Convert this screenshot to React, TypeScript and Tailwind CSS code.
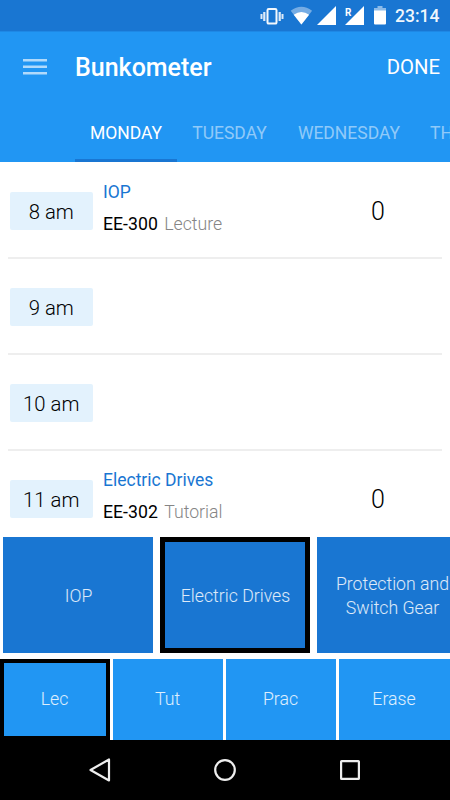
import { ReactNode } from 'react';

type Slot = {
  time: string;
  subject?: string;
  code?: string;
  kind?: string;
  bunks?: number;
};

const slots: Slot[] = [
  { time: '8 am', subject: 'IOP', code: 'EE-300', kind: 'Lecture', bunks: 0 },
  { time: '9 am' },
  { time: '10 am' },
  { time: '11 am', subject: 'Electric Drives', code: 'EE-302', kind: 'Tutorial', bunks: 0 },
];

const kinds = ['Lec', 'Tut', 'Prac', 'Erase'];

function StatusBar() {
  return (
    <div className="flex h-8 shrink-0 items-center justify-end border-b border-[#1e88e5] bg-[#1976d2] pr-[8px]">
      <svg width="130" height="32" viewBox="0 0 130 32" fill="#fff" className="shrink-0">
        {/* vibrate */}
        <rect x="7.500" y="9" width="9" height="14.6" rx="1.2" fill="none" stroke="#fff" strokeOpacity="0.95" strokeWidth="2" />
        <path d="M3.200 12h2.200v9H3.200zM0.500 14h2v5h-2zM18.600 12h2.200v9h-2.200zM21.500 14h2v5h-2z" fillOpacity="0.85" />
        {/* wifi */}
        <path d="M41.400 24.500 30.700 10.700Q41.400 2.700 52.100 10.700z" fillOpacity="0.4" />
        <path d="M41.400 24.500 33.700 14.700Q41.400 9.300 49.100 14.700z" />
        {/* sim signals */}
        <path d="M76 6v19H57z" />
        <path d="M104 6v19H85z" />
        <text x="85" y="16" fontSize="10" fontWeight="700" fontFamily="Roboto, sans-serif">R</text>
        {/* battery */}
        <path d="M117.500 6h5v2h3.500v3h-12V8h3.500z" fillOpacity="0.5" />
        <path d="M114 10.500h12V23.500q0 1-1 1h-10q-1 0-1-1z" />
      </svg>
      <span className="ml-[5px] w-[47px] text-[17.5px] leading-8 font-medium whitespace-nowrap text-white/95">23:14</span>
    </div>
  );
}

function Header() {
  return (
    <header className="flex h-[130px] shrink-0 flex-col bg-[#2196f3]">
      <div className="flex h-[71px] items-center pr-[10px] pl-[23px] text-white">
        <svg width="24" height="18" viewBox="0 0 24 18" fill="#fff" fillOpacity="0.65">
          <path d="M0 0h24v2.600H0zM0 6.500h24v2.600H0zM0 13h24v2.600H0z" />
        </svg>
        <h1 className="ml-7 text-[25px] font-medium">Bunkometer</h1>
        <span className="ml-auto text-[20.3px]">DONE</span>
      </div>
      <nav className="ml-[75px] flex h-[59px] overflow-hidden text-[17.5px] leading-[60px] whitespace-nowrap text-white/50">
        <span className="w-[102px] shrink-0 border-b-[3px] border-[#1976d2] text-center text-white">MONDAY</span>
        <span className="w-[105px] shrink-0 text-center">TUESDAY</span>
        <span className="w-[134px] shrink-0 text-center">WEDNESDAY</span>
        <span className="ml-[14px] shrink-0">THURSDAY</span>
      </nav>
    </header>
  );
}

function SlotRow({ slot }: { slot: Slot }) {
  return (
    <li className="mr-2 ml-2 flex h-[96px] shrink-0 items-center border-b-2 border-[#eeeeee] pt-[2px] pl-[2px]">
      <div className="h-[38px] w-[82.500px] rounded-[2px] bg-[#e3f2fd] text-center text-[20.3px] leading-[40px] font-light">
        {slot.time}
      </div>
      {slot.subject && (
        <>
          <div className="ml-[10.500px] w-[240px] pb-[6px]">
            <div className="text-[17.5px] leading-8 text-[#1976d2]">{slot.subject}</div>
            <div className="text-[17.700px] leading-8">
              {slot.code} <span className="ml-[2px] font-light text-[#858585]">{slot.kind}</span>
            </div>
          </div>
          <div className="w-[70px] pt-[2px] text-center text-[25px] font-light">{slot.bunks}</div>
        </>
      )}
    </li>
  );
}

function SubjectTile({ children, selected }: { children: ReactNode; selected?: boolean }) {
  return (
    <div
      className={
        'flex h-[115.500px] w-[150px] shrink-0 items-center justify-center bg-[#1976d2] pt-[2px] pl-[1px] text-center text-[17.700px] leading-[24px] font-light whitespace-nowrap text-white/85 ' +
        (selected ? 'border-[5px] border-black' : '')
      }
    >
      {children}
    </div>
  );
}

function NavBar() {
  return (
    <div className="flex h-[60px] shrink-0 items-center justify-center gap-[101px] bg-black">
      <svg width="24" height="26" viewBox="0 0 24 26" fill="none" stroke="#eee" strokeWidth="2.200" strokeLinejoin="round">
        <path d="M21 2.500v21L2.500 13z" />
      </svg>
      <svg width="24" height="24" viewBox="0 0 24 24" fill="none" stroke="#eee" strokeWidth="2.200">
        <circle cx="12" cy="12" r="9.800" />
      </svg>
      <svg width="24" height="24" viewBox="0 0 24 24" fill="none" stroke="#eee" strokeWidth="2.200">
        <rect x="3.100" y="3.100" width="17.800" height="17.800" rx="0.500" />
      </svg>
    </div>
  );
}

export default function App() {
  return (
    <div className="flex h-[800px] w-[450px] flex-col overflow-hidden bg-white font-[Roboto,sans-serif] text-black">
      <StatusBar />
      <Header />
      <ul className="flex h-[375px] shrink-0 flex-col overflow-hidden pt-[1px]">
        {slots.map((slot) => (
          <SlotRow key={slot.time} slot={slot} />
        ))}
      </ul>
      <div className="flex h-[121.500px] shrink-0 gap-[7px] overflow-hidden pl-[3px]">
        <SubjectTile>IOP</SubjectTile>
        <SubjectTile selected>Electric Drives</SubjectTile>
        <SubjectTile>
          Protection and
          <br />
          Switch Gear
        </SubjectTile>
      </div>
      <div className="grid h-[81.500px] shrink-0 grid-cols-[110px_110px_110px_111px] gap-[3px]">
        {kinds.map((kind) => (
          <div
            key={kind}
            className={
              'flex items-center justify-center bg-[#2196f3] pt-[1px] pr-[1px] text-[17.700px] font-light text-white/85 ' +
              (kind === 'Lec' ? 'border-4 border-black' : '')
            }
          >
            {kind}
          </div>
        ))}
      </div>
      <NavBar />
    </div>
  );
}
